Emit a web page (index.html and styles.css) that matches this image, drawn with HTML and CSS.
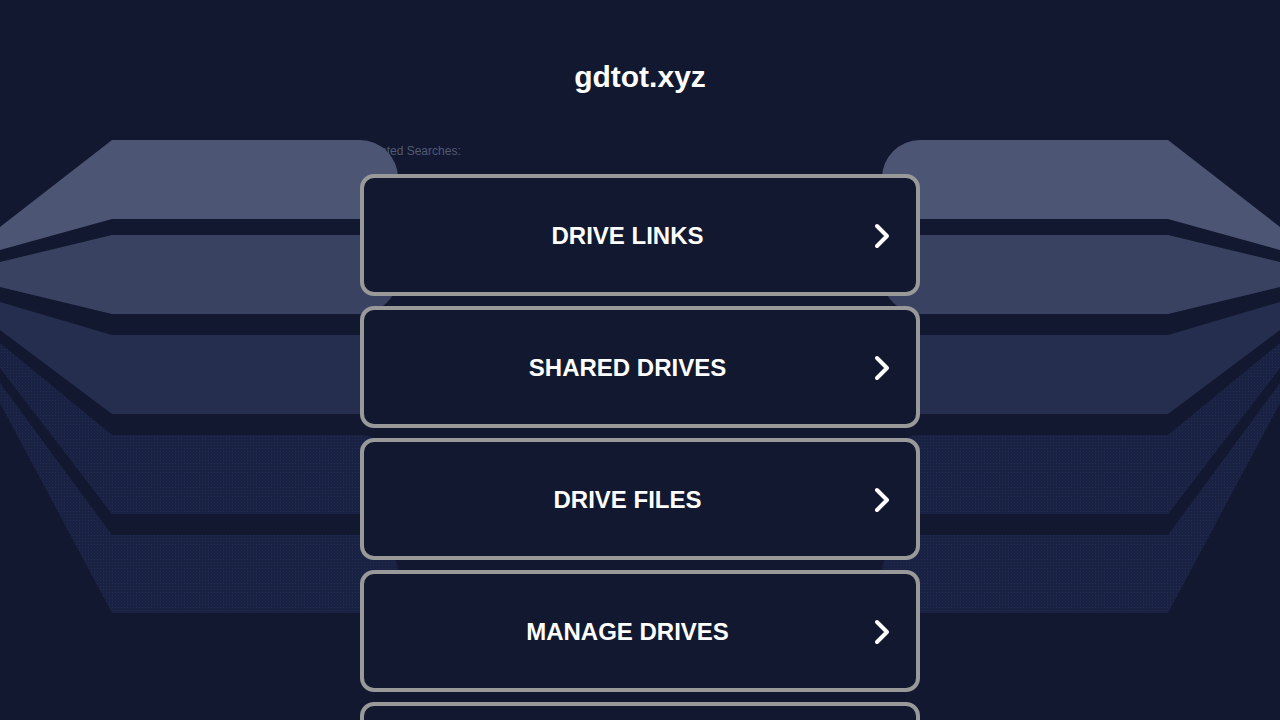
FILE: index.html
```html
<!DOCTYPE html>
<html lang="en">
<head>
<meta charset="utf-8">
<title>gdtot.xyz</title>
<link rel="stylesheet" href="styles.css">
</head>
<body>
<svg class="backdrop" width="1280" height="720" viewBox="0 0 1280 720" aria-hidden="true">
  <defs>
    <pattern id="dots" width="3" height="3" patternUnits="userSpaceOnUse">
      <rect width="3" height="3" fill="#1a2244"/>
      <rect x="1" y="1" width="1" height="1" fill="#222b50"/>
    </pattern>
    <g id="wing">
      <path d="M112 140 H360 A38 38 0 0 1 398 178 V181 A38 38 0 0 1 360 219 H112 L0 250 V227 Z" fill="#4d5574"/>
      <path d="M112 235 H360 A38 38 0 0 1 398 273 V276 A38 38 0 0 1 360 314 H112 L0 287 V262 Z" fill="#394261"/>
      <path d="M112 335 H360 A38 38 0 0 1 398 373 V376 A38 38 0 0 1 360 414 H112 L0 330 V302 Z" fill="#252e4e"/>
      <path d="M112 435 H360 A38 38 0 0 1 398 473 V476 A38 38 0 0 1 360 514 H112 L0 368 V343 Z" fill="url(#dots)"/>
      <path d="M112 535 H360 A38 38 0 0 1 398 573 V575 A38 38 0 0 1 360 613 H112 L0 403 V383 Z" fill="url(#dots)"/>
    </g>
  </defs>
  <use href="#wing"/>
  <use href="#wing" transform="translate(1280 0) scale(-1 1)"/>
</svg>

<header class="header">
  <h1 class="title">gdtot.xyz</h1>
</header>

<main class="content">
  <p class="related">Related Searches:</p>
  <ul class="links">
    <li class="link">
      <a class="link-box" href="#"><span class="link-text">DRIVE LINKS</span>
        <svg class="chev" width="18" height="28" viewBox="0 0 18 28"><path d="M4 4 L14 14 L4 24" fill="none" stroke="#fff" stroke-width="4" stroke-linecap="round" stroke-linejoin="round"/></svg>
      </a>
    </li>
    <li class="link">
      <a class="link-box" href="#"><span class="link-text">SHARED DRIVES</span>
        <svg class="chev" width="18" height="28" viewBox="0 0 18 28"><path d="M4 4 L14 14 L4 24" fill="none" stroke="#fff" stroke-width="4" stroke-linecap="round" stroke-linejoin="round"/></svg>
      </a>
    </li>
    <li class="link">
      <a class="link-box" href="#"><span class="link-text">DRIVE FILES</span>
        <svg class="chev" width="18" height="28" viewBox="0 0 18 28"><path d="M4 4 L14 14 L4 24" fill="none" stroke="#fff" stroke-width="4" stroke-linecap="round" stroke-linejoin="round"/></svg>
      </a>
    </li>
    <li class="link">
      <a class="link-box" href="#"><span class="link-text">MANAGE DRIVES</span>
        <svg class="chev" width="18" height="28" viewBox="0 0 18 28"><path d="M4 4 L14 14 L4 24" fill="none" stroke="#fff" stroke-width="4" stroke-linecap="round" stroke-linejoin="round"/></svg>
      </a>
    </li>
    <li class="link">
      <a class="link-box" href="#" aria-label="More">
        <svg class="chev" width="18" height="28" viewBox="0 0 18 28"><path d="M4 4 L14 14 L4 24" fill="none" stroke="#fff" stroke-width="4" stroke-linecap="round" stroke-linejoin="round"/></svg>
      </a>
    </li>
  </ul>
</main>
</body>
</html>
```

FILE: styles.css
```css
html, body {
  margin: 0;
  padding: 0;
}

body {
  background: #11182f;
  font-family: "Liberation Sans", Arial, sans-serif;
  color: #ffffff;
  overflow: hidden;
  height: 720px;
}

.backdrop {
  position: absolute;
  top: 0;
  left: 0;
  z-index: 0;
}

.header {
  padding-top: 59px;
  text-align: center;
  position: relative;
  z-index: 1;
}

.title {
  margin: 0;
  font-size: 30px;
  line-height: 36px;
  font-weight: bold;
  color: #ffffff;
}

.content {
  width: 560px;
  margin: 0 auto;
}

.related {
  margin: 49px 0 0 2px;
  font-size: 12px;
  line-height: 14px;
  color: #525a76;
}

.links {
  list-style: none;
  margin: 16px 0 0;
  padding: 0;
  display: flex;
  flex-direction: column;
  gap: 10px;
  position: relative;
  z-index: 1;
}

.link-box {
  position: relative;
  display: flex;
  align-items: center;
  justify-content: center;
  box-sizing: border-box;
  height: 122px;
  padding: 2px 25px 0 0;
  border: 4px solid #999999;
  border-radius: 14px;
  background: #11182f;
  text-decoration: none;
  color: #ffffff;
}

.link-text {
  font-size: 24px;
  font-weight: bold;
  line-height: 28px;
}

.chev {
  position: absolute;
  right: 25px;
  top: calc(50% + 1px);
  transform: translateY(-50%);
}
```
